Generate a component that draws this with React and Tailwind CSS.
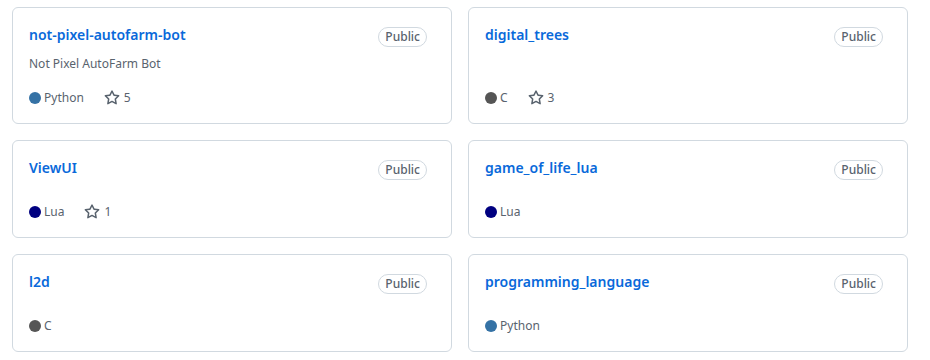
const repos = [
  { name: "not-pixel-autofarm-bot", desc: "Not Pixel AutoFarm Bot", lang: "Python", color: "bg-[#3572a5]", stars: 5 },
  { name: "digital_trees", desc: "", lang: "C", color: "bg-[#555555]", stars: 3 },
  { name: "ViewUI", desc: "", lang: "Lua", color: "bg-[#000080]", stars: 1 },
  { name: "game_of_life_lua", desc: "", lang: "Lua", color: "bg-[#000080]" },
  { name: "l2d", desc: "", lang: "C", color: "bg-[#555555]" },
  { name: "programming_language", desc: "", lang: "Python", color: "bg-[#3572a5]" },
];

function StarIcon() {
  return (
    <svg viewBox="0 0 16 16" width="16" height="16" className="mr-1 fill-[#59636e]">
      <path d="M8 .25a.75.75 0 0 1 .673.418l1.882 3.815 4.21.612a.75.75 0 0 1 .416 1.279l-3.046 2.97.719 4.192a.751.751 0 0 1-1.088.791L8 12.347l-3.766 1.98a.75.75 0 0 1-1.088-.79l.72-4.194L.818 6.374a.75.75 0 0 1 .416-1.28l4.21-.611L7.327.668A.75.75 0 0 1 8 .25Zm0 2.445L6.615 5.5a.75.75 0 0 1-.564.41l-3.097.45 2.24 2.184a.75.75 0 0 1 .216.664l-.528 3.084 2.769-1.456a.75.75 0 0 1 .698 0l2.77 1.456-.53-3.084a.75.75 0 0 1 .216-.664l2.24-2.183-3.096-.45a.75.75 0 0 1-.564-.41L8 2.694Z" />
    </svg>
  );
}

function PinnedCard({ repo }) {
  return (
    <div className="flex flex-col rounded-md border border-[#d1d9e0] bg-white p-4">
      <div className="flex h-[22px] items-start">
        <span className="flex-1 text-sm leading-[21px] font-semibold text-[#0969da]">{repo.name}</span>
        <span className="mr-2 mt-[3px] rounded-full border border-[#d1d9e0] px-[6px] text-xs leading-[18px] font-medium text-[#59636e]">
          Public
        </span>
      </div>
      <p className="mt-2 flex-1 text-xs leading-[19px] text-[#59636e]">{repo.desc}</p>
      <p className="mt-4 flex h-[18px] items-center text-xs text-[#59636e]">
        <span className="mr-5 inline-flex items-center">
          <span className={`mr-[3px] inline-block h-3 w-3 rounded-full ${repo.color}`} />
          {repo.lang}
        </span>
        {repo.stars && (
          <span className="inline-flex items-center">
            <StarIcon />
            {repo.stars}
          </span>
        )}
      </p>
    </div>
  );
}

export default function App() {
  return (
    <div className="h-[360px] w-[930px] bg-white pl-3 pt-[7px]" style={{ fontFamily: '"Noto Sans", sans-serif' }}>
      <div className="grid grid-cols-[440px_440px] gap-4">
        {repos.map((r) => (
          <PinnedCard key={r.name} repo={r} />
        ))}
      </div>
    </div>
  );
}
